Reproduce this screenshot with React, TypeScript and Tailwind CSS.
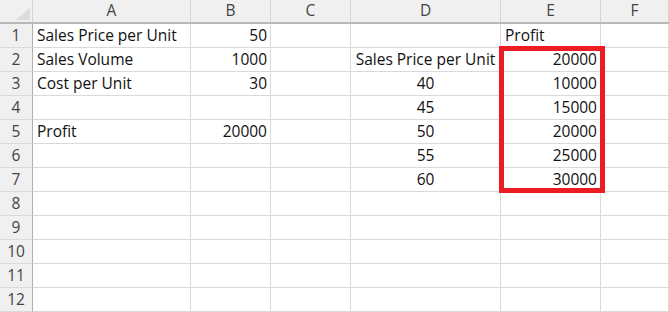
const cols = ['A', 'B', 'C', 'D', 'E', 'F'];
const widths = ['w-[158px]', 'w-[80px]', 'w-[80px]', 'w-[150px]', 'w-[100px]', 'flex-1'];

type Cell = { text?: string; align?: 'left' | 'right' | 'center' };

const rows: Cell[][] = [
  [{ text: 'Sales Price per Unit' }, { text: '50', align: 'right' }, {}, {}, { text: 'Profit' }, {}],
  [{ text: 'Sales Volume' }, { text: '1000', align: 'right' }, {}, { text: 'Sales Price per Unit', align: 'center' }, { text: '20000', align: 'right' }, {}],
  [{ text: 'Cost per Unit' }, { text: '30', align: 'right' }, {}, { text: '40', align: 'center' }, { text: '10000', align: 'right' }, {}],
  [{}, {}, {}, { text: '45', align: 'center' }, { text: '15000', align: 'right' }, {}],
  [{ text: 'Profit' }, { text: '20000', align: 'right' }, {}, { text: '50', align: 'center' }, { text: '20000', align: 'right' }, {}],
  [{}, {}, {}, { text: '55', align: 'center' }, { text: '25000', align: 'right' }, {}],
  [{}, {}, {}, { text: '60', align: 'center' }, { text: '30000', align: 'right' }, {}],
  [{}, {}, {}, {}, {}, {}],
  [{}, {}, {}, {}, {}, {}],
  [{}, {}, {}, {}, {}, {}],
  [{}, {}, {}, {}, {}, {}],
  [{}, {}, {}, {}, {}, {}],
];

const alignClass = (a?: string) =>
  a === 'right' ? 'justify-end pr-[3px]' : a === 'center' ? 'justify-center' : 'justify-start pl-[4px]';

export default function App() {
  return (
    <div
      className="relative w-[669px] h-[312px] overflow-hidden bg-white text-[15.5px] text-[#111]"
      style={{ fontFamily: '"Open Sans", "Liberation Sans", sans-serif' }}
    >
      {/* column headers */}
      <div className="flex h-[24px] bg-[#f0f0f0] border-b-2 border-[#b8b8b8]">
        <div className="relative w-[33px] shrink-0 border-r border-[#d4d4d4]">
          <div className="absolute right-[2px] bottom-[2px] w-0 h-0 border-l-[14px] border-l-transparent border-b-[12px] border-b-[#dcdcdc]" />
        </div>
        {cols.map((c, i) => (
          <div
            key={c}
            className={`${widths[i]} shrink-0 flex items-center justify-center text-[#444] border-r border-[#d4d4d4]`}
          >
            {c}
          </div>
        ))}
      </div>

      {rows.map((r, ri) => (
        <div key={ri} className="flex h-[24px]">
          <div className="w-[33px] shrink-0 flex items-center justify-center bg-[#f0f0f0] text-[#444] border-r border-[#b0b0b0] border-b border-b-[#dadada]">
            {ri + 1}
          </div>
          {r.map((cell, ci) => (
            <div
              key={ci}
              className={`${widths[ci]} shrink-0 flex items-center whitespace-nowrap overflow-hidden border-r border-b border-[#dadada] ${alignClass(cell.align)}`}
            >
              {cell.text}
            </div>
          ))}
        </div>
      ))}

      {/* highlight around E2:E7 */}
      <div className="absolute left-[499px] top-[46px] w-[106px] h-[147px] border-[5px] border-[#ed1c24] pointer-events-none" />
    </div>
  );
}
